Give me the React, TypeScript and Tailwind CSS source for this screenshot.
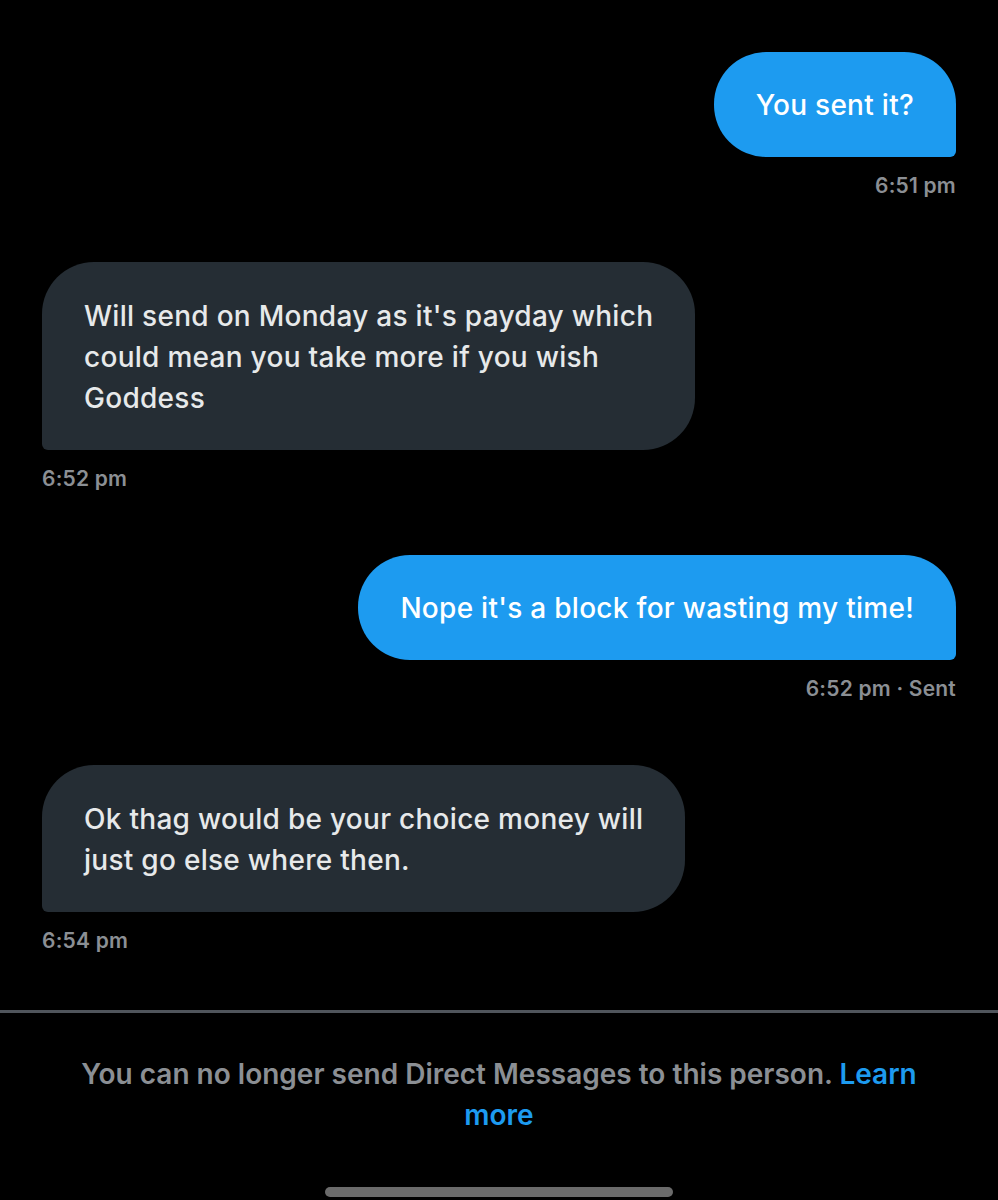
import React from "react";

const font = { fontFamily: "Inter, 'Noto Sans', sans-serif" };

function Outgoing({ lines, meta }: { lines: string[]; meta: string }) {
  return (
    <div className="flex flex-col items-end">
      <div className="w-fit rounded-[52px] rounded-br-[6px] bg-[#1d9bf0] px-[42px] pt-[33px] pb-[31px] text-[28px] leading-[41px] font-medium tracking-[0.01em] text-white">
        {lines.map((l) => (
          <span key={l} className="block whitespace-nowrap">{l}</span>
        ))}
      </div>
      <div className="mt-[17px] text-[21px] leading-[24px] font-semibold tracking-[0.01em] text-[#8b8f94]">{meta}</div>
    </div>
  );
}

function Incoming({ lines, meta }: { lines: string[]; meta: string }) {
  return (
    <div className="flex flex-col items-start">
      <div className="w-fit rounded-[52px] rounded-bl-[6px] bg-[#252d34] px-[42px] pt-[34px] pb-[31px] text-[28px] leading-[41px] font-medium tracking-[0.01em] text-[#e7e9ea]">
        {lines.map((l) => (
          <span key={l} className="block whitespace-nowrap">{l}</span>
        ))}
      </div>
      <div className="mt-[17px] text-[21px] leading-[24px] font-semibold tracking-[0.01em] text-[#8b8f94]">{meta}</div>
    </div>
  );
}

export default function App() {
  return (
    <div className="h-[1200px] w-full overflow-hidden bg-black flex flex-col" style={font}>
      <div className="flex flex-col gap-[64px] px-[42px] pt-[52px]">
        <Outgoing lines={["You sent it?"]} meta="6:51 pm" />
        <Incoming
          lines={[
            "Will send on Monday as it's payday which",
            "could mean you take more if you wish",
            "Goddess",
          ]}
          meta="6:52 pm"
        />
        <Outgoing lines={["Nope it's a block for wasting my time!"]} meta="6:52 pm · Sent" />
        <Incoming
          lines={["Ok thag would be your choice money will", "just go else where then."]}
          meta="6:54 pm"
        />
      </div>
      <div className="mt-[57px] h-[3px] w-full bg-[#50555c]" />
      <div className="px-[70px] pt-[41px] text-center text-[28px] leading-[41px] font-semibold text-[#8b8f94]">
        You can no longer send Direct Messages to this person.{" "}
        <span className="text-[#1d9bf0]">Learn more</span>
      </div>
      <div className="mt-auto mb-[3px] flex justify-center">
        <div className="h-[10px] w-[348px] rounded-full bg-[#6b6b6b]" />
      </div>
    </div>
  );
}
